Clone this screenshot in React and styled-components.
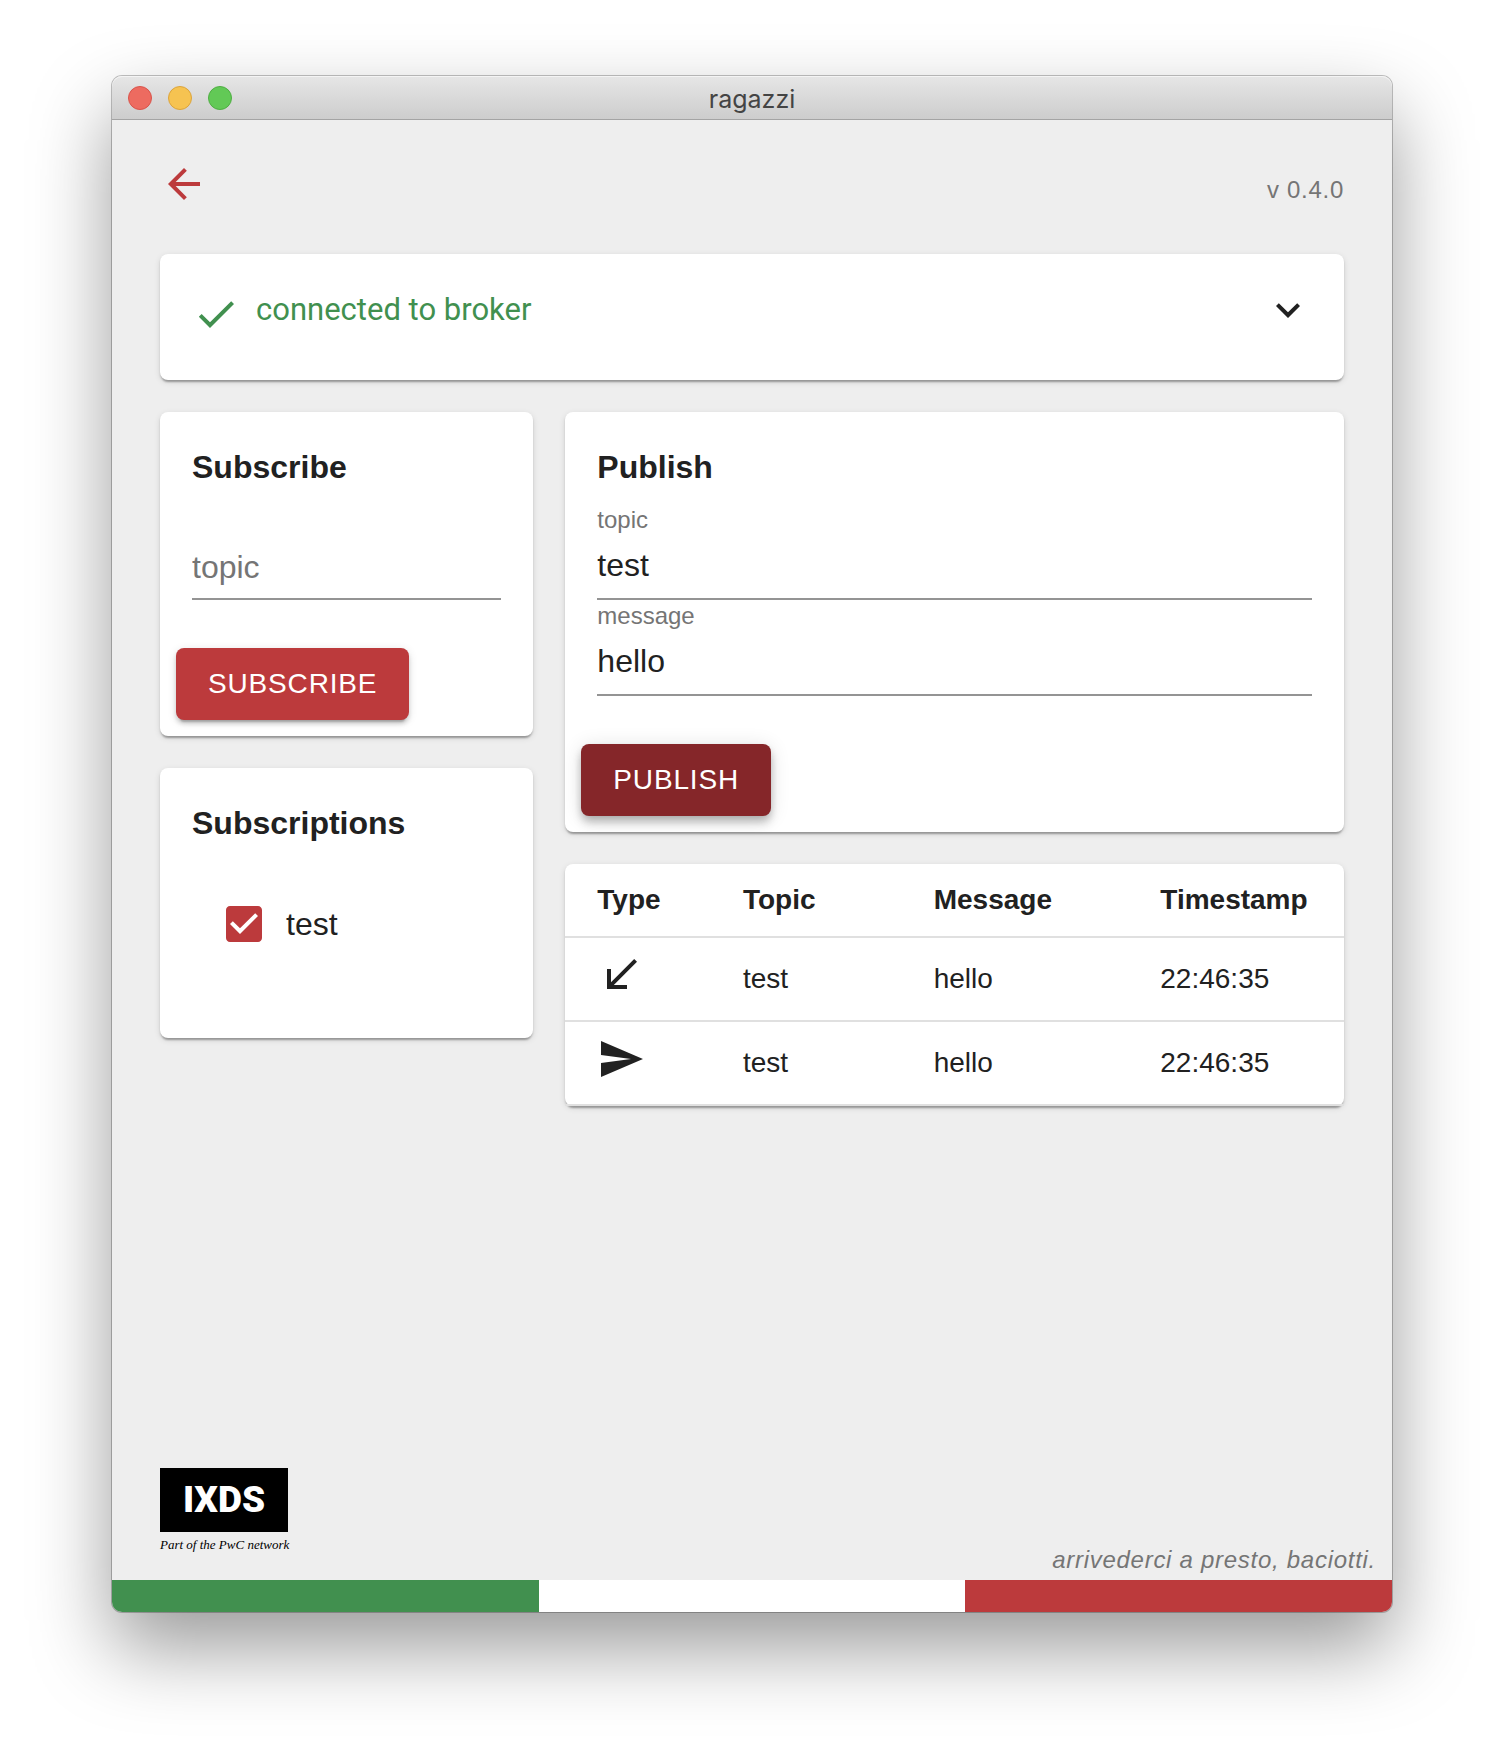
import React, { useState } from "react";
import styled, { createGlobalStyle } from "styled-components";

const RED = "#bc3a3c";
const RED_DARK = "#852629";
const GREEN = "#41904f";
const INK = "#212121";
const MUTED = "#757575";

const GlobalStyle = createGlobalStyle`
  *, *::before, *::after { box-sizing: border-box; }
  body {
    margin: 0;
    background: #fff;
    color: ${INK};
    font-family: Helvetica, "Liberation Sans", Arial, sans-serif;
  }
`;

const Desktop = styled.div`
  display: flex;
  min-height: 100vh;
  padding: 76px 112px 148px;
`;

const Window = styled.div`
  flex: 1;
  display: flex;
  flex-direction: column;
  min-width: 0;
  border-radius: 10px;
  background: #eee;
  box-shadow: 0 0 0 1px rgba(0, 0, 0, 0.24), 0 36px 80px rgba(0, 0, 0, 0.4);
`;

const TitleBar = styled.header`
  display: grid;
  grid-template-columns: 1fr auto 1fr;
  align-items: center;
  height: 44px;
  padding: 0 16px;
  border-bottom: 1px solid #a4a4a4;
  border-radius: 10px 10px 0 0;
  background: linear-gradient(#e6e6e6, #cdcdcd);
  box-shadow: inset 0 1px #f4f4f4;
`;

const Lights = styled.div`
  display: flex;
  gap: 16px;
`;

const Light = styled.button`
  width: 24px;
  height: 24px;
  padding: 0;
  border: 1px solid ${(p) => p.$edge};
  border-radius: 50%;
  background: ${(p) => p.$fill};
`;

const WindowTitle = styled.h1`
  margin: 0;
  padding-top: 2px;
  font-family: Inter, sans-serif;
  font-size: 25px;
  font-weight: 400;
  line-height: 32px;
  color: #444;
`;

const Content = styled.main`
  flex: 1;
  display: flex;
  flex-direction: column;
  padding: 40px 48px 0;
`;

const TopRow = styled.div`
  display: flex;
  align-items: center;
  justify-content: space-between;
  margin-bottom: 46px;
`;

const IconButton = styled.button`
  display: flex;
  padding: 0;
  border: 0;
  background: none;
  color: ${(p) => p.$color || INK};
`;

const Svg = styled.svg`
  display: block;
  width: 48px;
  height: 48px;
  fill: currentColor;
`;

const Caption = styled.span`
  padding-top: ${(p) => (p.$lowered ? "12px" : "0")};
  font-size: 24px;
  font-style: ${(p) => (p.$italic ? "italic" : "normal")};
  line-height: ${(p) => (p.$lowered ? "36px" : "40px")};
  letter-spacing: 0.03em;
  color: ${MUTED};
`;

const Card = styled.section`
  border-radius: 8px;
  background: #fff;
  box-shadow: 0 4px 2px -2px rgba(0, 0, 0, 0.2), 0 2px 2px rgba(0, 0, 0, 0.14),
    0 2px 6px rgba(0, 0, 0, 0.12);
`;

const StatusCard = styled(Card)`
  display: flex;
  align-items: flex-start;
  justify-content: space-between;
  padding: 32px 32px 46px;
`;

const Status = styled.div`
  display: flex;
  align-items: flex-start;
  gap: 16px;
  color: ${GREEN};

  svg {
    margin-top: 4px;
    margin-bottom: -4px;
  }
`;

const StatusText = styled.span`
  font-family: Roboto, sans-serif;
  font-size: 31px;
  line-height: 48px;
`;

const Columns = styled.div`
  display: grid;
  grid-template-columns: repeat(12, minmax(0, 1fr));
  gap: 32px;
  margin-top: 32px;
`;

const Column = styled.div`
  grid-column: span ${(p) => p.$span};
  display: flex;
  flex-direction: column;
  gap: 32px;
`;

const CardBody = styled.div`
  padding: 32px;
`;

const CardTitle = styled.h2`
  margin: 0 0 14px;
  font-size: 32px;
  font-weight: 700;
  line-height: 46px;
`;

const Field = styled.div`
  display: flex;
  flex-direction: column;
  padding-top: ${(p) => (p.$floating ? "0" : "32px")};
`;

const FieldLabel = styled.label`
  font-size: 24px;
  line-height: 32px;
  color: ${MUTED};
`;

const TextInput = styled.input`
  width: 100%;
  height: 64px;
  padding: 0 0 4px;
  border: 0;
  border-bottom: 2px solid #949494;
  border-radius: 0;
  outline: 0;
  background: none;
  color: ${INK};
  font-family: inherit;
  font-size: 32px;

  &:placeholder-shown {
    padding-bottom: 0;
  }

  &::placeholder {
    color: ${MUTED};
    opacity: 1;
  }
`;

const Actions = styled.div`
  display: flex;
  padding: 16px;
`;

const ContainedButton = styled.button`
  height: 72px;
  padding: 0 32px;
  border: 0;
  border-radius: 8px;
  background: ${(p) => (p.$raised ? RED_DARK : RED)};
  box-shadow: ${(p) =>
    p.$raised
      ? "0 4px 8px -2px rgba(0,0,0,.2), 0 8px 10px rgba(0,0,0,.14), 0 2px 20px rgba(0,0,0,.12)"
      : "0 6px 2px -4px rgba(0,0,0,.2), 0 4px 4px rgba(0,0,0,.14), 0 2px 10px rgba(0,0,0,.12)"};
  color: #fff;
  font-family: inherit;
  font-size: 28px;
  letter-spacing: 0.03em;
  text-transform: uppercase;
`;

const SubscriptionList = styled.ul`
  margin: 0;
  padding: 40px 28px 58px;
  list-style: none;
`;

const CheckLabel = styled.label`
  display: flex;
  align-items: center;
  gap: 18px;
  font-size: 32px;
  line-height: 48px;
`;

const CheckBox = styled.span`
  display: grid;
  color: ${RED};

  > * {
    grid-area: 1 / 1;
  }

  input {
    width: 48px;
    height: 48px;
    margin: 0;
    opacity: 0;
  }
`;

const Table = styled.table`
  width: 100%;
  border-collapse: separate;
  border-spacing: 0;
  table-layout: fixed;
  font-size: 28px;
  line-height: 40px;
  text-align: left;
`;

const HeadCell = styled.th`
  width: ${(p) => p.$width || "auto"};
  height: 74px;
  padding: 0 0 0 32px;
  border-bottom: 2px solid #e0e0e0;
  font-weight: 700;
`;

const Cell = styled.td`
  height: 84px;
  padding: 0 0 0 32px;
  border-bottom: 2px solid #e0e0e0;

  svg {
    margin-bottom: 8px;
  }
`;

const Footer = styled.footer`
  display: flex;
  align-items: flex-end;
  justify-content: space-between;
  margin-top: auto;
  padding: 0 16px 0 48px;
`;

const Logo = styled.div`
  width: 128px;
  margin-bottom: 22px;
`;

const LogoMark = styled.div`
  background: #000;
  color: #fff;
  font-family: Roboto, sans-serif;
  font-size: 37px;
  font-weight: 900;
  line-height: 64px;
  text-align: center;
`;

const LogoTagline = styled.div`
  font-family: "Liberation Serif", serif;
  font-size: 13px;
  font-style: italic;
  line-height: 26px;
  color: #000;
  white-space: nowrap;
`;

const Flag = styled.div`
  display: flex;
  height: 32px;
  border-radius: 0 0 10px 10px;
  overflow: hidden;
`;

const Stripe = styled.div`
  flex: 1;
  background: ${(p) => p.$color};
`;

const ICONS = {
  back: "M20 11H7.83l5.59-5.59L12 4l-8 8 8 8 1.41-1.41L7.83 13H20v-2z",
  check: "M9 16.17L4.83 12l-1.42 1.41L9 19 21 7l-1.41-1.41z",
  expand: "M16.59 8.59L12 13.17 7.41 8.59 6 10l6 6 6-6z",
  checkbox:
    "M19 3H5c-1.11 0-2 .9-2 2v14c0 1.1.89 2 2 2h14c1.11 0 2-.9 2-2V5c0-1.1-.89-2-2-2zm-9 14l-5-5 1.41-1.41L10 14.17l7.59-7.59L19 8l-9 9z",
  received: "M20 5.41L18.59 4 7 15.59V9H5v10h10v-2H8.41z",
  send: "M2.01 21L23 12 2.01 3 2 10l15 2-15 2z",
};

const Icon = ({ name }) => (
  <Svg viewBox="0 0 24 24" aria-hidden="true">
    <path d={ICONS[name]} />
  </Svg>
);

const MESSAGES = [
  { type: "received", topic: "test", message: "hello", time: "22:46:35" },
  { type: "send", topic: "test", message: "hello", time: "22:46:35" },
];

export default function App() {
  const [subTopic, setSubTopic] = useState("");
  const [topic, setTopic] = useState("test");
  const [message, setMessage] = useState("hello");
  const [active, setActive] = useState(true);

  return (
    <>
      <GlobalStyle />
      <Desktop>
        <Window>
          <TitleBar>
            <Lights>
              <Light $fill="#ed6b60" $edge="#d9544b" aria-label="Close" />
              <Light $fill="#f6c351" $edge="#dca43c" aria-label="Minimize" />
              <Light $fill="#62c956" $edge="#4fae43" aria-label="Zoom" />
            </Lights>
            <WindowTitle>ragazzi</WindowTitle>
          </TitleBar>

          <Content>
            <TopRow>
              <IconButton $color={RED} aria-label="Back">
                <Icon name="back" />
              </IconButton>
              <Caption $lowered>v 0.4.0</Caption>
            </TopRow>

            <StatusCard>
              <Status>
                <Icon name="check" />
                <StatusText>connected to broker</StatusText>
              </Status>
              <IconButton aria-label="Expand" aria-expanded="false">
                <Icon name="expand" />
              </IconButton>
            </StatusCard>

            <Columns>
              <Column $span={4}>
                <Card>
                  <CardBody>
                    <CardTitle>Subscribe</CardTitle>
                    <Field>
                      <TextInput
                        aria-label="topic"
                        placeholder="topic"
                        value={subTopic}
                        onChange={(e) => setSubTopic(e.target.value)}
                      />
                    </Field>
                  </CardBody>
                  <Actions>
                    <ContainedButton>Subscribe</ContainedButton>
                  </Actions>
                </Card>

                <Card>
                  <CardBody>
                    <CardTitle>Subscriptions</CardTitle>
                    <SubscriptionList>
                      <li>
                        <CheckLabel>
                          <CheckBox>
                            <Icon name="checkbox" />
                            <input
                              type="checkbox"
                              checked={active}
                              onChange={(e) => setActive(e.target.checked)}
                            />
                          </CheckBox>
                          test
                        </CheckLabel>
                      </li>
                    </SubscriptionList>
                  </CardBody>
                </Card>
              </Column>

              <Column $span={8}>
                <Card>
                  <CardBody>
                    <CardTitle>Publish</CardTitle>
                    <Field $floating>
                      <FieldLabel htmlFor="publish-topic">topic</FieldLabel>
                      <TextInput
                        id="publish-topic"
                        value={topic}
                        onChange={(e) => setTopic(e.target.value)}
                      />
                    </Field>
                    <Field $floating>
                      <FieldLabel htmlFor="publish-message">message</FieldLabel>
                      <TextInput
                        id="publish-message"
                        value={message}
                        onChange={(e) => setMessage(e.target.value)}
                      />
                    </Field>
                  </CardBody>
                  <Actions>
                    <ContainedButton $raised>Publish</ContainedButton>
                  </Actions>
                </Card>

                <Card>
                  <Table>
                    <thead>
                      <tr>
                        <HeadCell $width="18.7%">Type</HeadCell>
                        <HeadCell $width="24.5%">Topic</HeadCell>
                        <HeadCell $width="29.1%">Message</HeadCell>
                        <HeadCell>Timestamp</HeadCell>
                      </tr>
                    </thead>
                    <tbody>
                      {MESSAGES.map((m) => (
                        <tr key={m.type}>
                          <Cell>
                            <Icon name={m.type} />
                          </Cell>
                          <Cell>{m.topic}</Cell>
                          <Cell>{m.message}</Cell>
                          <Cell>{m.time}</Cell>
                        </tr>
                      ))}
                    </tbody>
                  </Table>
                </Card>
              </Column>
            </Columns>
          </Content>

          <Footer>
            <Logo>
              <LogoMark>IXDS</LogoMark>
              <LogoTagline>Part of the PwC network</LogoTagline>
            </Logo>
            <Caption $italic>arrivederci a presto, baciotti.</Caption>
          </Footer>
          <Flag>
            <Stripe $color={GREEN} />
            <Stripe $color="#fff" />
            <Stripe $color={RED} />
          </Flag>
        </Window>
      </Desktop>
    </>
  );
}
